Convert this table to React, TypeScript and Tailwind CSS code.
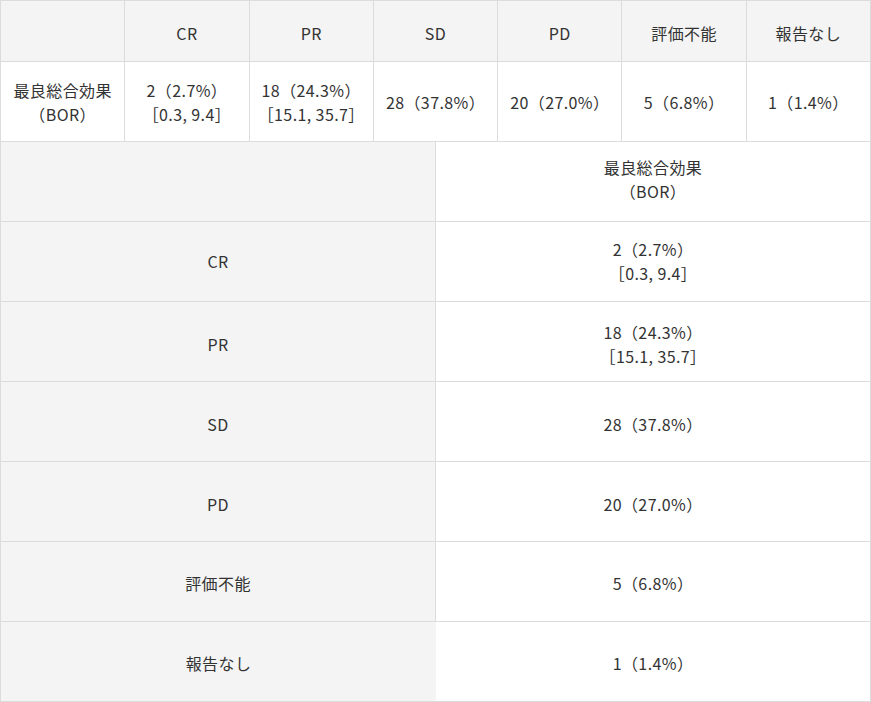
import React from "react";

const font = { fontFamily: '"Noto Sans CJK JP", "Noto Sans", sans-serif' };

const topHeaders = ["CR", "PR", "SD", "PD", "評価不能", "報告なし"];
const values: string[][] = [
  ["2（2.7%）", "［0.3, 9.4］"],
  ["18（24.3%）", "［15.1, 35.7］"],
  ["28（37.8%）"],
  ["20（27.0%）"],
  ["5（6.8%）"],
  ["1（1.4%）"],
];
const rowPad = ["pb-[2px]", "pt-[4px]", "pt-[4px]", "pt-[4px]", "pt-[3px]", "pt-[3px]"];

function Lines({ lines }: { lines: string[] }) {
  return (
    <div className="flex flex-col items-center">
      {lines.map((l, i) => (
        <span key={i}>{l}</span>
      ))}
    </div>
  );
}

export default function App() {
  return (
    <div className="w-[871px] bg-white text-[16px] leading-6 tracking-wide text-[#333]" style={font}>
      {/* top table */}
      <div className="grid grid-cols-7 border-l border-t border-[#dcdcdc]">
        <div className="h-[61px] border-b border-r border-[#dcdcdc] bg-[#f4f4f4]" />
        {topHeaders.map((h) => (
          <div
            key={h}
            className="flex h-[61px] items-center justify-center border-b border-r border-[#dcdcdc] bg-[#f4f4f4] pt-[4px]"
          >
            {h}
          </div>
        ))}
        <div className="flex h-[80px] items-center justify-center border-b border-r border-[#dcdcdc] bg-white">
          <Lines lines={["最良総合効果", "（BOR）"]} />
        </div>
        {values.map((v, i) => (
          <div
            key={i}
            className="flex h-[80px] items-center justify-center border-b border-r border-[#dcdcdc] bg-white pt-[1px]"
          >
            <Lines lines={v} />
          </div>
        ))}
      </div>

      {/* second table */}
      <div className="grid w-[870px] grid-cols-[435px_435px] border-l border-[#dcdcdc]">
        <div className="h-[80px] border-b border-r border-[#dcdcdc] bg-[#f4f4f4]" />
        <div className="flex h-[80px] items-center justify-center border-b border-r border-[#dcdcdc] bg-white pb-[6px]">
          <Lines lines={["最良総合効果", "（BOR）"]} />
        </div>
        {topHeaders.map((h, i) => {
          const last = i === topHeaders.length - 1;
          const hClass = last
            ? "flex h-[80px] items-center justify-center border-b border-[#dcdcdc] bg-[#f4f4f4] "
            : "flex h-[80px] items-center justify-center border-b border-r border-[#dcdcdc] bg-[#f4f4f4] ";
          const heightFix = i === 4 ? " h-[79px]" : "";
          return (
            <React.Fragment key={h}>
              <div className={hClass + rowPad[i] + heightFix}>{h}</div>
              <div
                className={
                  "flex h-[80px] items-center justify-center border-b border-r border-[#dcdcdc] bg-white " +
                  rowPad[i] +
                  heightFix
                }
              >
                <Lines lines={values[i]} />
              </div>
            </React.Fragment>
          );
        })}
      </div>
    </div>
  );
}
